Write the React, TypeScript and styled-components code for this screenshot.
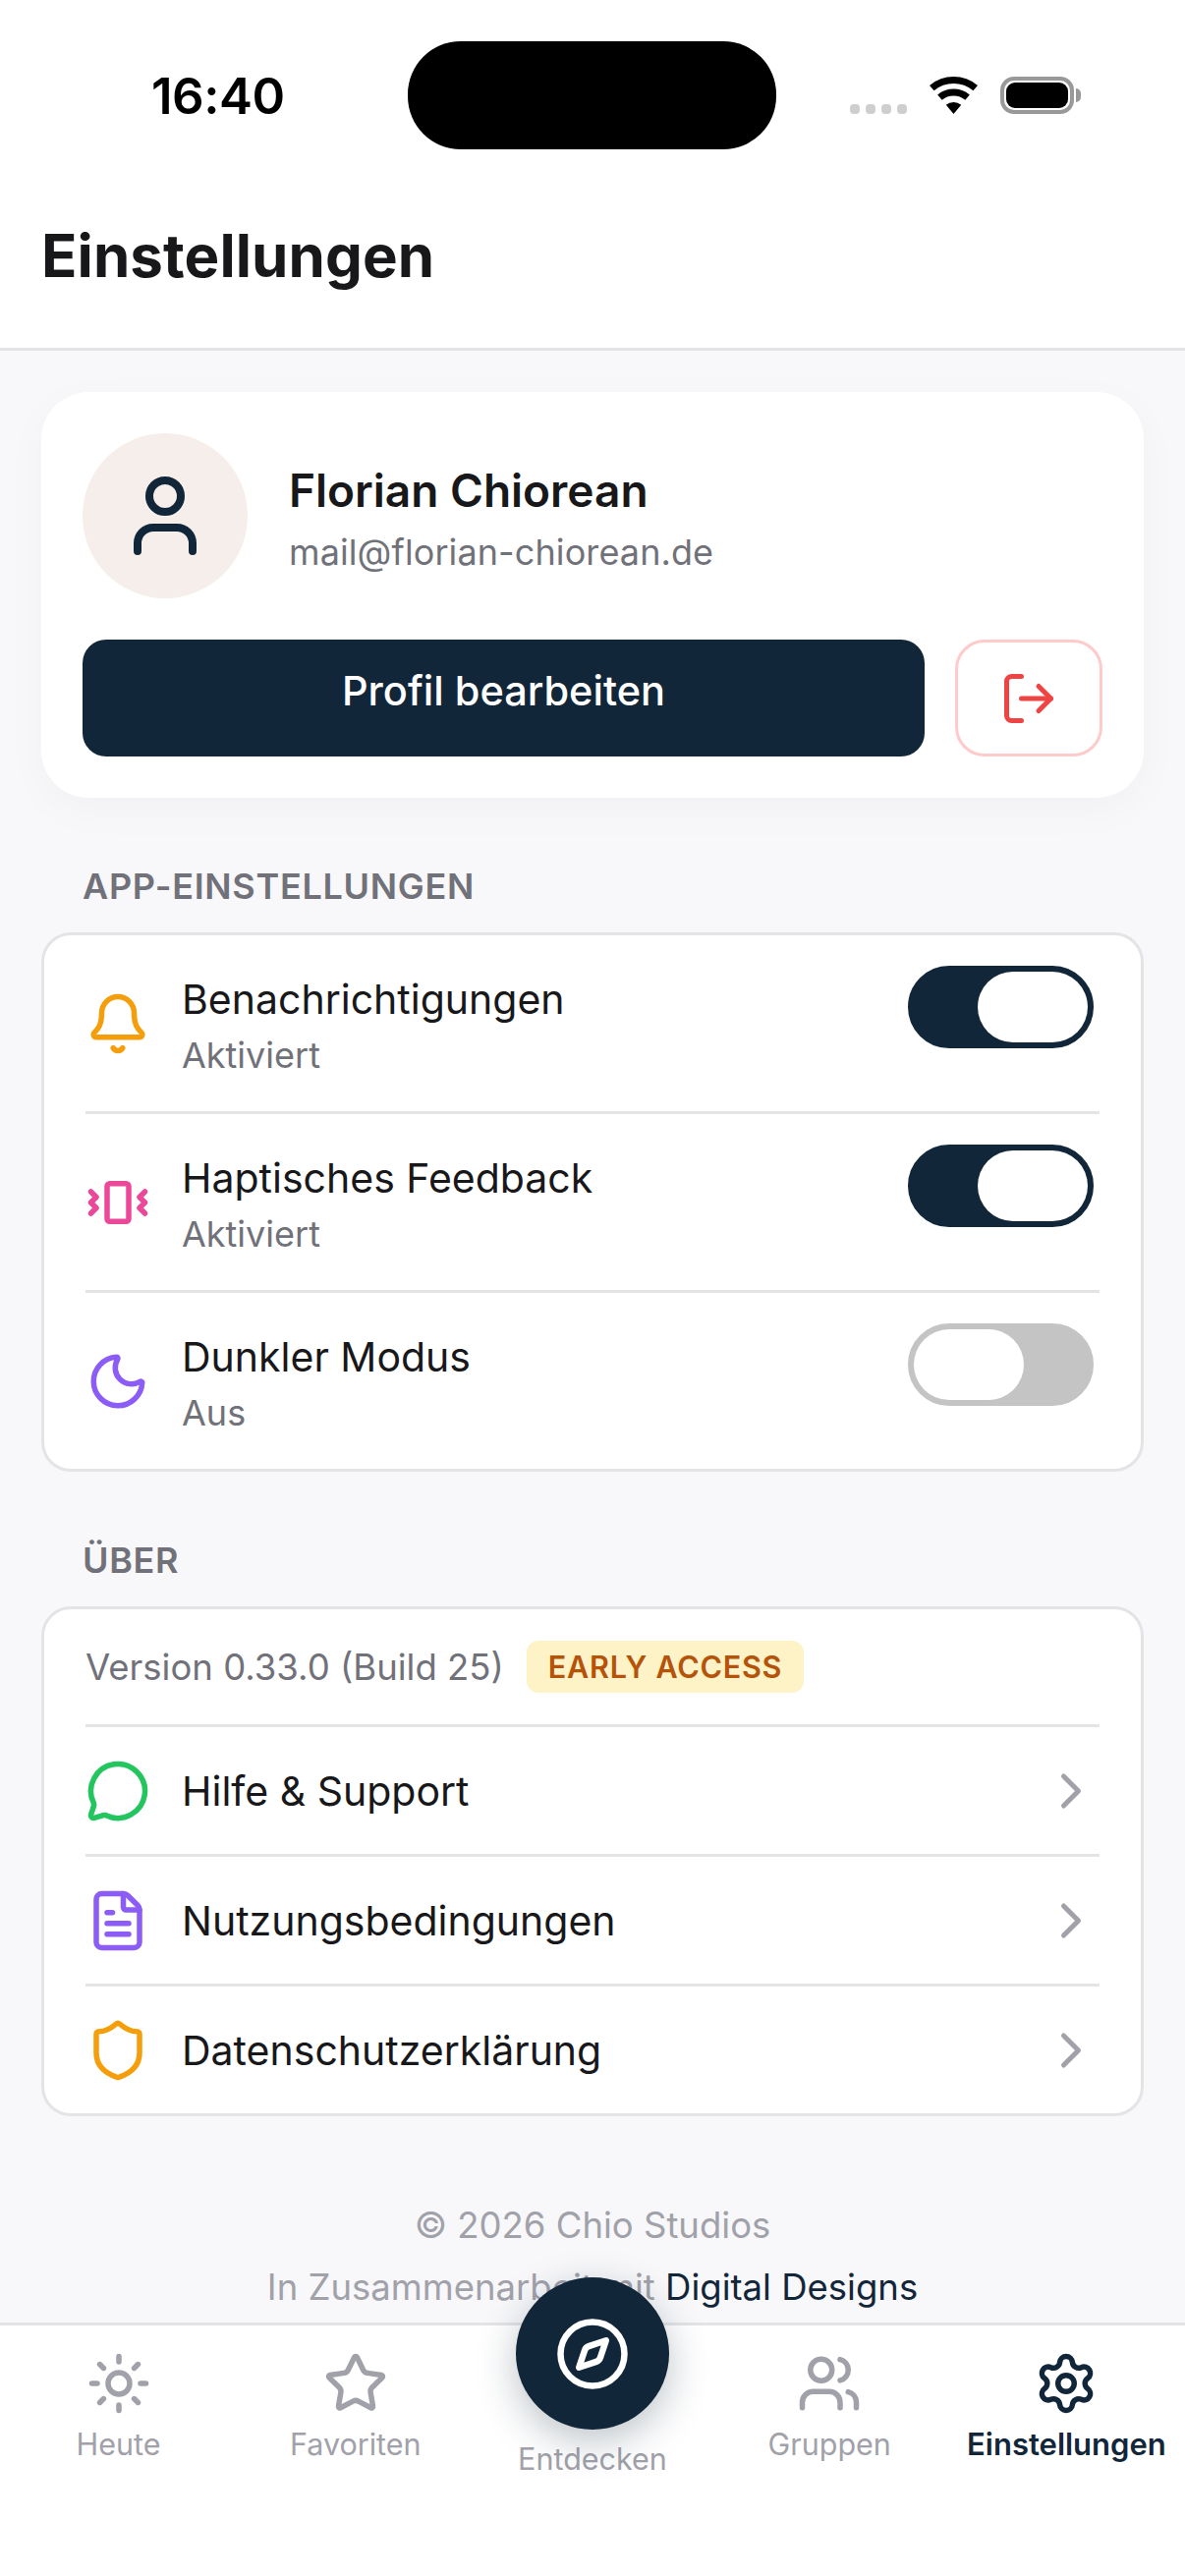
import React from "react";
import styled, { createGlobalStyle } from "styled-components";
import {
  Bell, ChevronRight, Compass, FileText, LogOut, MessageCircle, Moon, Settings,
  Shield, Star, Sun, User, Users, Vibrate,
} from "lucide-react";

const NAVY = "#12263a";
const GREY = "#71717a";
const LIGHT = "#a1a1aa";
const INK = "#18181b";
const LINE = "#e4e4e7";

const Global = createGlobalStyle`
  html, body { margin: 0; padding: 0; background: #fff; }
  * { box-sizing: border-box; }
  body { font-family: Inter, "Liberation Sans", sans-serif; }
`;

const Screen = styled.div`
  width: 1206px; height: 2622px; display: flex; flex-direction: column;
  background: #f8f8fa; overflow: hidden; position: relative;
`;
const Header = styled.header`
  background: #fff; border-bottom: 3px solid ${LINE}; height: 357px; flex: none;
`;
const StatusBar = styled.div`
  height: 194px; display: flex; align-items: center; position: relative;
  padding: 0 113px 0 154px;
`;
const Time = styled.span`
  font-size: 51px; font-weight: 600; color: #000; width: 261px; letter-spacing: -0.5px;
`;
const Island = styled.div`
  width: 375px; height: 110px; border-radius: 54px; background: #000; flex: none;
`;
const StatusIcons = styled.div`
  margin-left: auto; display: flex; align-items: flex-end; height: 38px;
`;
const Dots = styled.div`
  display: flex; gap: 5.5px; margin-right: 22px; padding-bottom: 0;
`;
const Dot = styled.i`
  width: 10.5px; height: 10px; border-radius: 4px; background: #cecece; display: block;
`;
const Battery = styled.div`
  width: 75px; height: 38px; margin-left: 22px; border: 4px solid #999; border-radius: 14px;
  padding: 2px; position: relative; background: #fff;
  &::before {
    content: ""; display: block; height: 100%; border-radius: 9px; background: #000;
  }
  &::after {
    content: ""; position: absolute; right: -11px; top: 8px; width: 5px; height: 14px;
    background: #999; border-radius: 0 7px 7px 0;
  }
`;
const Title = styled.h1`
  margin: 0; height: 132px; padding-left: 42px; display: flex; align-items: center;
  font-size: 60px; font-weight: 700; color: ${INK}; letter-spacing: 0.1px;
`;

const Main = styled.main`
  flex: 1; min-height: 0; overflow: hidden; padding: 42px 42px 0;
`;
const ProfileCard = styled.section`
  background: #fff; border-radius: 48px; padding: 42px;
  box-shadow: 0 12px 45px rgba(0, 0, 0, 0.03);
`;
const ProfileRow = styled.div`
  display: flex; align-items: center; gap: 42px; margin-bottom: 42px;
`;
const Avatar = styled.div`
  width: 168px; height: 168px; border-radius: 50%; background: #f5eeea; color: ${NAVY};
  display: flex; align-items: center; justify-content: center; flex: none;
`;
const ProfileText = styled.div`
  padding-top: 8px;
`;
const Name = styled.div`
  font-size: 46px; font-weight: 600; color: ${INK}; line-height: 60px; margin-bottom: 6px;
`;
const Email = styled.div`
  font-size: 36px; color: ${GREY}; line-height: 54px; letter-spacing: 0.1px;
`;
const Actions = styled.div`
  display: flex; gap: 31px; height: 119px;
`;
const PrimaryButton = styled.button`
  flex: 1; border: 0; border-radius: 24px; background: ${NAVY}; color: #fff;
  font: 500 41.5px Inter, sans-serif; padding: 0 0 16px;
`;
const LogoutButton = styled.button`
  width: 150px; border: 3px solid #fecaca; border-radius: 30px; background: #fff; color: #ef4444;
  display: flex; align-items: center; justify-content: center; padding: 0;
`;
const SectionLabel = styled.h2`
  margin: 63px 0 20px; padding-left: 42px; font-size: 36px; line-height: 54px; font-weight: 600;
  color: ${GREY}; letter-spacing: 0.7px;
`;
const ListCard = styled.section`
  background: #fff; border: 3px solid ${LINE}; border-radius: 30px; padding: 0 42px;
`;
const Row = styled.div<{ $h: number; $first?: boolean }>`
  height: ${(p) => p.$h}px; display: flex; align-items: center; gap: 32px;
  border-top: ${(p) => (p.$first ? "0" : `3px solid ${LINE}`)};
`;
const IconSlot = styled.div<{ $color: string }>`
  width: 66px; height: 66px; color: ${(p) => p.$color}; flex: none; display: flex;
`;
const RowText = styled.div`
  flex: 1; padding-top: 4px;
`;
const RowTitle = styled.div`
  font-size: 41px; line-height: 60px; color: ${INK};
`;
const RowSub = styled.div`
  font-size: 36px; line-height: 54px; color: ${GREY};
`;
const Toggle = styled.div<{ $on: boolean }>`
  width: 189px; height: 84px; border-radius: 42px; flex: none; align-self: flex-start;
  margin: 31px 6px 0 0; border: 6px solid ${(p) => (p.$on ? NAVY : "#c4c4c4")};
  background: ${(p) => (p.$on ? NAVY : "#c4c4c4")};
  display: flex; justify-content: ${(p) => (p.$on ? "flex-end" : "flex-start")};
  &::before {
    content: ""; width: 112px; height: 72px; border-radius: 36px; background: #fff;
  }
`;
const VersionText = styled.span`
  font-size: 36.5px; color: ${GREY}; margin-left: 0;
`;
const Badge = styled.span`
  background: #fef3c7; color: #b45309; font-size: 30.6px; font-weight: 600; letter-spacing: 0.7px;
  height: 53px; padding: 0 22px; border-radius: 12px; display: flex; align-items: center;
  margin-left: -9px; white-space: nowrap;
`;
const LinkTitle = styled.div`
  flex: 1; font-size: 41px; color: ${INK};
`;
const Chevron = styled.div`
  color: ${LIGHT}; display: flex; margin-right: -1px;
`;
const Footer = styled.footer`
  margin-top: 80px; text-align: center; font-size: 36.5px; line-height: 63px; color: ${LIGHT};
`;
const Partner = styled.span`
  color: ${NAVY};
`;

const Nav = styled.nav`
  height: 258px; flex: none; background: #fff; border-top: 3px solid ${LINE};
  display: grid; grid-template-columns: repeat(5, 1fr); position: relative;
`;
const NavItem = styled.div<{ $active?: boolean; $center?: boolean }>`
  display: flex; flex-direction: column; align-items: center;
  padding-top: ${(p) => (p.$center ? "116px" : "26px")};
  color: ${(p) => (p.$active ? NAVY : LIGHT)};
  font-size: ${(p) => (p.$active ? "31px" : "30.5px")}; line-height: 40px;
  font-weight: ${(p) => (p.$active ? 600 : 400)};
  white-space: nowrap;
`;
const NavIcon = styled.div`
  height: 66px; margin-bottom: 9px; display: flex;
`;
const Fab = styled.div`
  position: absolute; left: 525px; top: -49px; width: 156px; height: 155px; border-radius: 50%;
  background: ${NAVY}; color: #fff; display: flex; align-items: center; justify-content: center;
  box-shadow: 0 12px 40px rgba(18, 38, 58, 0.28);
`;

const rows = [
  { icon: Bell, color: "#f59e0b", title: "Benachrichtigungen", sub: "Aktiviert", on: true, h: 179 },
  { icon: Vibrate, color: "#ec4899", title: "Haptisches Feedback", sub: "Aktiviert", on: true, h: 182 },
  { icon: Moon, color: "#8b5cf6", title: "Dunkler Modus", sub: "Aus", on: false, h: 182 },
];
const links = [
  { icon: MessageCircle, color: "#22c55e", title: "Hilfe & Support" },
  { icon: FileText, color: "#8b5cf6", title: "Nutzungsbedingungen" },
  { icon: Shield, color: "#f59e0b", title: "Datenschutzerklärung" },
];
const tabs = [
  { icon: Sun, label: "Heute" },
  { icon: Star, label: "Favoriten" },
  { label: "Entdecken", center: true },
  { icon: Users, label: "Gruppen" },
  { icon: Settings, label: "Einstellungen", active: true },
];

export default function App() {
  return (
    <Screen>
      <Global />
      <Header>
        <StatusBar>
          <Time>16:40</Time>
          <Island />
          <StatusIcons>
            <Dots>
              {[0, 1, 2, 3].map((i) => <Dot key={i} />)}
            </Dots>
            <svg width="51" height="38" viewBox="0 0 51 38">
              <path d="M3.3 11.6A34.5 34.5 0 0 1 47.7 11.6" fill="none" stroke="#000" strokeWidth="7" />
              <path d="M11.4 21.1A22 22 0 0 1 39.6 21.1" fill="none" stroke="#000" strokeWidth="7" />
              <path d="M25.5 38L17.8 28.8A12 12 0 0 1 33.2 28.8Z" fill="#000" />
            </svg>
            <Battery />
          </StatusIcons>
        </StatusBar>
        <Title>Einstellungen</Title>
      </Header>
      <Main>
        <ProfileCard>
          <ProfileRow>
            <Avatar><User size={96} strokeWidth={2} /></Avatar>
            <ProfileText>
              <Name>Florian Chiorean</Name>
              <Email>mail@florian-chiorean.de</Email>
            </ProfileText>
          </ProfileRow>
          <Actions>
            <PrimaryButton>Profil bearbeiten</PrimaryButton>
            <LogoutButton><LogOut size={60} strokeWidth={2} /></LogoutButton>
          </Actions>
        </ProfileCard>

        <SectionLabel>APP-EINSTELLUNGEN</SectionLabel>
        <ListCard>
          {rows.map((r, i) => (
            <Row key={r.title} $h={r.h} $first={i === 0}>
              <IconSlot $color={r.color}><r.icon size={66} strokeWidth={2} /></IconSlot>
              <RowText>
                <RowTitle>{r.title}</RowTitle>
                <RowSub>{r.sub}</RowSub>
              </RowText>
              <Toggle $on={r.on} />
            </Row>
          ))}
        </ListCard>

        <SectionLabel>ÜBER</SectionLabel>
        <ListCard>
          <Row $h={117} $first>
            <VersionText>Version 0.33.0 (Build 25)</VersionText>
            <Badge>EARLY ACCESS</Badge>
          </Row>
          {links.map((l) => (
            <Row key={l.title} $h={132}>
              <IconSlot $color={l.color}><l.icon size={66} strokeWidth={2} /></IconSlot>
              <LinkTitle>{l.title}</LinkTitle>
              <Chevron><ChevronRight size={60} strokeWidth={2} /></Chevron>
            </Row>
          ))}
        </ListCard>

        <Footer>
          <div>© 2026 Chio Studios</div>
          <div>In Zusammenarbeit mit <Partner>Digital Designs</Partner></div>
        </Footer>
      </Main>
      <Nav>
        {tabs.map((t) => (
          <NavItem key={t.label} $active={t.active} $center={t.center}>
            {t.icon && <NavIcon><t.icon size={66} strokeWidth={2} /></NavIcon>}
            {t.label}
          </NavItem>
        ))}
        <Fab><Compass size={78} strokeWidth={2} /></Fab>
      </Nav>
    </Screen>
  );
}
